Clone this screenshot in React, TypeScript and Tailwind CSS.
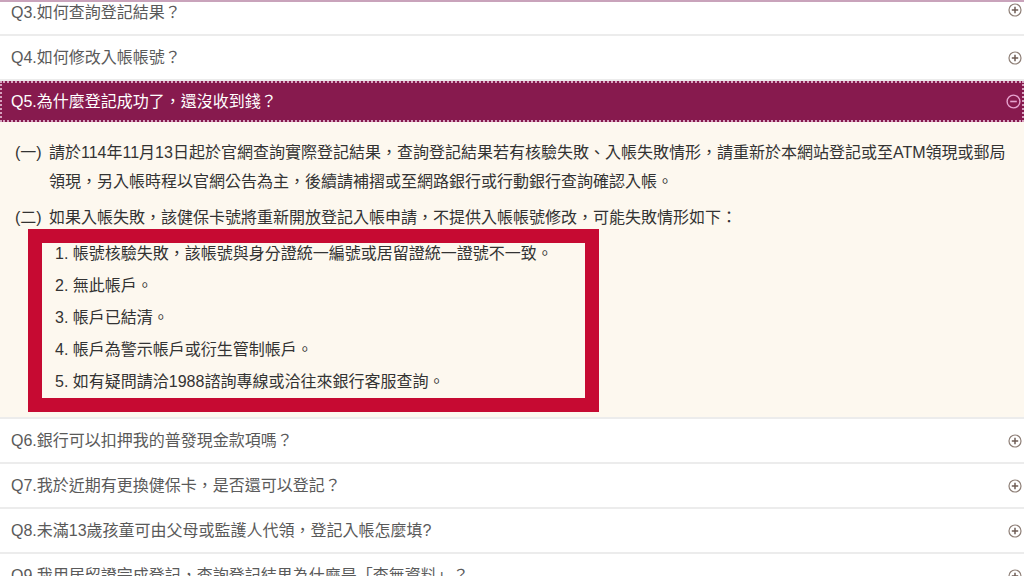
import React from "react";

const font = {
  fontFamily: '"Liberation Sans", "Noto Sans CJK TC", sans-serif',
};

function PlusIcon() {
  return (
    <svg width="14" height="14" viewBox="0 0 14 14" className="shrink-0">
      <circle cx="7" cy="7" r="6" fill="none" stroke="#8e7f77" strokeWidth="1.2" />
      <path d="M7 3.8V10.2M3.8 7H10.2" stroke="#6f5d55" strokeWidth="1.5" />
    </svg>
  );
}

function MinusIcon() {
  return (
    <svg width="15" height="15" viewBox="0 0 15 15" className="shrink-0">
      <circle cx="7.5" cy="7.5" r="6.4" fill="none" stroke="#e7a3cf" strokeWidth="1.4" />
      <path d="M4.2 7.5H10.8" stroke="#e7a3cf" strokeWidth="1.6" />
    </svg>
  );
}

function Row({ q, cls }: { q: string; cls: string }) {
  return (
    <div
      className={`flex justify-between pl-[11px] pr-[2px] bg-white border-b-2 border-[#ececec] text-[16px] text-[#5a5a5a] ${cls}`}
    >
      <span className="whitespace-nowrap">{q}</span>
      <PlusIcon />
    </div>
  );
}

export default function App() {
  const items = [
    "1. 帳號核驗失敗，該帳號與身分證統一編號或居留證統一證號不一致。",
    "2. 無此帳戶。",
    "3. 帳戶已結清。",
    "4. 帳戶為警示帳戶或衍生管制帳戶。",
    "5. 如有疑問請洽1988諮詢專線或洽往來銀行客服查詢。",
  ];
  return (
    <div className="w-[1024px] h-[576px] overflow-hidden bg-white" style={font}>
      <div className="h-[2px] bg-[#c9a3bb]" />
      <Row q="Q3.如何查詢登記結果？" cls="h-[34px] items-start pt-[1px] leading-[20px]" />
      <Row q="Q4.如何修改入帳帳號？" cls="h-[45px] items-center" />
      <div className="h-[41px] flex items-center justify-between pl-[9px] pr-[1px] bg-[#871a4e] border-2 border-dotted border-[#d7a2bf] text-[16px] text-white">
        <span className="whitespace-nowrap">Q5.為什麼登記成功了，還沒收到錢？</span>
        <MinusIcon />
      </div>
      <div className="h-[297px] bg-[#fdf8ef] border-b-2 border-[#ececec] pt-[16px] pl-[15px] text-[16px] text-[#333333]">
        <div className="flex leading-[29px]">
          <span className="w-[34px] shrink-0">(一)</span>
          <span className="w-[970px]">
            請於114年11月13日起於官網查詢實際登記結果，查詢登記結果若有核驗失敗、入帳失敗情形，請重新於本網站登記或至ATM領現或郵局領現，另入帳時程以官網公告為主，後續請補摺或至網路銀行或行動銀行查詢確認入帳。
          </span>
        </div>
        <div className="flex leading-[22px] mt-[11px]">
          <span className="w-[34px] shrink-0">(二)</span>
          <span>如果入帳失敗，該健保卡號將重新開放登記入帳申請，不提供入帳帳號修改，可能失敗情形如下：</span>
        </div>
        <div className="ml-[13px] w-[571px] border-[14px] border-[#c60a32] bg-[#fdf8ef] pl-[13px] pt-0 pb-[5px] flex flex-col gap-[10px] text-[#333333]">
          {items.map((t) => (
            <div key={t} className="leading-[22px] whitespace-nowrap">
              {t}
            </div>
          ))}
        </div>
      </div>
      <Row q="Q6.銀行可以扣押我的普發現金款項嗎？" cls="h-[45px] items-center" />
      <Row q="Q7.我於近期有更換健保卡，是否還可以登記？" cls="h-[45px] items-center" />
      <Row q="Q8.未滿13歲孩童可由父母或監護人代領，登記入帳怎麼填?" cls="h-[45px] items-center" />
      <Row q="Q9.我用居留證完成登記，查詢登記結果為什麼是「查無資料」？" cls="h-[45px] items-center" />
    </div>
  );
}
